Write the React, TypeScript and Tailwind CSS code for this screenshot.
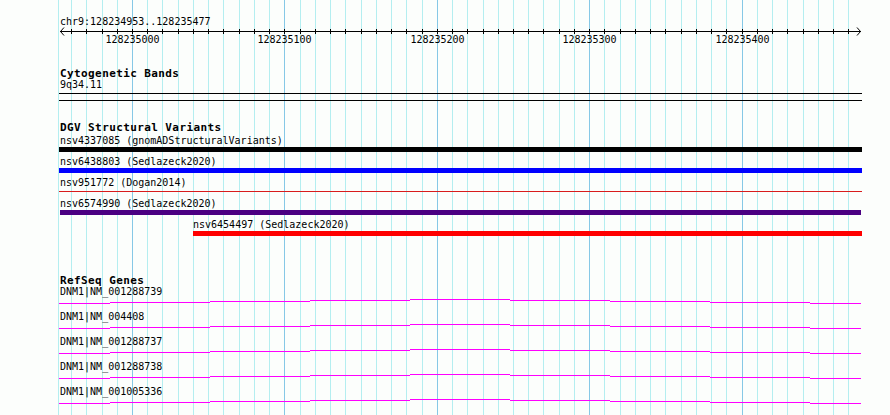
const minorTicks = Array.from({ length: 52 }, (_, i) => i - 4);
const tickX = (k: number) => Math.round(132 + k * 15.24);

const rulerLabels = [
  { text: '128235000', k: 0 },
  { text: '128235100', k: 10 },
  { text: '128235200', k: 20 },
  { text: '128235300', k: 30 },
  { text: '128235400', k: 40 },
];

const variants = [
  { label: 'nsv4337085 (gnomADStructuralVariants)', left: 'ml-[60px]', bar: 'ml-[59px] w-[803px] h-[5px] bg-black' },
  { label: 'nsv6438803 (Sedlazeck2020)', left: 'ml-[60px]', bar: 'ml-[59px] w-[803px] h-[5px] bg-[#0000ff]' },
  { label: 'nsv951772 (Dogan2014)', left: 'ml-[60px]', bar: 'ml-[59px] w-[803px] h-px mt-[2px] mb-[2px] bg-[#d81c1c]' },
  { label: 'nsv6574990 (Sedlazeck2020)', left: 'ml-[60px]', bar: 'ml-[60px] w-[801px] h-[5px] bg-[#4b0082]' },
  { label: 'nsv6454497 (Sedlazeck2020)', left: 'ml-[193px]', bar: 'ml-[193px] w-[669px] h-[5px] bg-[#ff0000]' },
];

const genes = ['DNM1|NM_001288739', 'DNM1|NM_004408', 'DNM1|NM_001288737', 'DNM1|NM_001288738', 'DNM1|NM_001005336'];

// flat "hat" intron, rasterised as 1px steps
const hat = [
  [59, 110, 6],
  [110, 210, 5],
  [210, 310, 4],
  [310, 410, 3],
  [410, 510, 2],
  [510, 610, 3],
  [610, 710, 4],
  [710, 810, 5],
  [810, 861, 6],
];

function Grid() {
  return (
    <svg className="absolute inset-0" width={890} height={415} shapeRendering="crispEdges">
      <line x1={58.5} x2={58.5} y1={0} y2={415} stroke="#b4eef0" />
      {minorTicks.map((k) => (
        <line
          key={k}
          x1={tickX(k) + 0.5}
          x2={tickX(k) + 0.5}
          y1={0}
          y2={415}
          stroke={k % 10 === 0 ? '#86c8e6' : '#b4eef0'}
        />
      ))}
    </svg>
  );
}

function Ruler() {
  return (
    <svg className="block overflow-visible" width={890} height={9} shapeRendering="crispEdges">
      <rect x={60} y={5} width={801} height={1} fill="#000" />
      {minorTicks.map((k) => (
        <rect key={k} x={tickX(k)} y={3} width={1} height={5} fill="#000" />
      ))}
      <polyline points="64,1.5 60.5,5.5 64,9.5" fill="none" stroke="#000" shapeRendering="auto" />
      <polyline points="857,1.5 860.5,5.5 857,9.5" fill="none" stroke="#000" shapeRendering="auto" />
    </svg>
  );
}

function Label({ children, className = '' }: { children: string; className?: string }) {
  return <div className={`h-[11px] text-[10px] leading-[11px] whitespace-pre text-black ${className}`}>{children}</div>;
}

function Title({ children, className = '' }: { children: string; className?: string }) {
  return (
    <div className={`ml-[60px] h-[11px] text-[11px] leading-[11px] font-bold tracking-[0.4px] whitespace-pre text-black ${className}`}>
      {children}
    </div>
  );
}

export default function App() {
  return (
    <div className="relative w-[890px] h-[415px] overflow-hidden bg-[#fcfefc] font-['DejaVu_Sans_Mono',monospace]">
      <Grid />
      <div className="relative flex flex-col">
        {/* ruler */}
        <div className="mt-[17px] ml-[60px] h-[9px] text-[10px] leading-[10px] text-black">chr9:128234953..128235477</div>
        <Ruler />
        <div className="relative h-[10px] text-[10px] leading-[10px]">
          {rulerLabels.map((l) => (
            <span
              key={l.text}
              className="absolute top-0 -translate-x-1/2 text-black"
              style={{ left: tickX(l.k) + 0.5 }}
            >
              {l.text}
            </span>
          ))}
        </div>

        {/* cytobands */}
        <Title className="mt-[23px]">Cytogenetic Bands</Title>
        <div className="ml-[60px] mt-px h-[10px] text-[10px] leading-[10px] text-black">9q34.11</div>
        <div className="ml-[59px] mt-[3px] w-[803px] h-px bg-black" />
        <div className="ml-[59px] mt-[6px] w-[803px] h-px bg-black" />

        {/* DGV */}
        <Title className="mt-[21px]">DGV Structural Variants</Title>
        <div className="mt-[2px] flex flex-col">
          {variants.map((v) => (
            <div key={v.label} className="flex flex-col h-[21px]">
              <Label className={v.left}>{v.label}</Label>
              <div className="mt-px h-[5px]">
                <div className={v.bar} />
              </div>
            </div>
          ))}
        </div>

        {/* RefSeq */}
        <Title className="mt-[35px]">RefSeq Genes</Title>
        <div className="flex flex-col">
          {genes.map((g) => (
            <div key={g} className="flex flex-col h-[25px]">
              <Label className="ml-[60px]">{g}</Label>
              <svg className="block" width={890} height={8} shapeRendering="crispEdges">
                {hat.map(([x1, x2, y]) => (
                  <rect key={x1} x={x1} y={y} width={x2 - x1} height={1} fill="#ff00ff" />
                ))}
              </svg>
            </div>
          ))}
        </div>
      </div>
    </div>
  );
}
